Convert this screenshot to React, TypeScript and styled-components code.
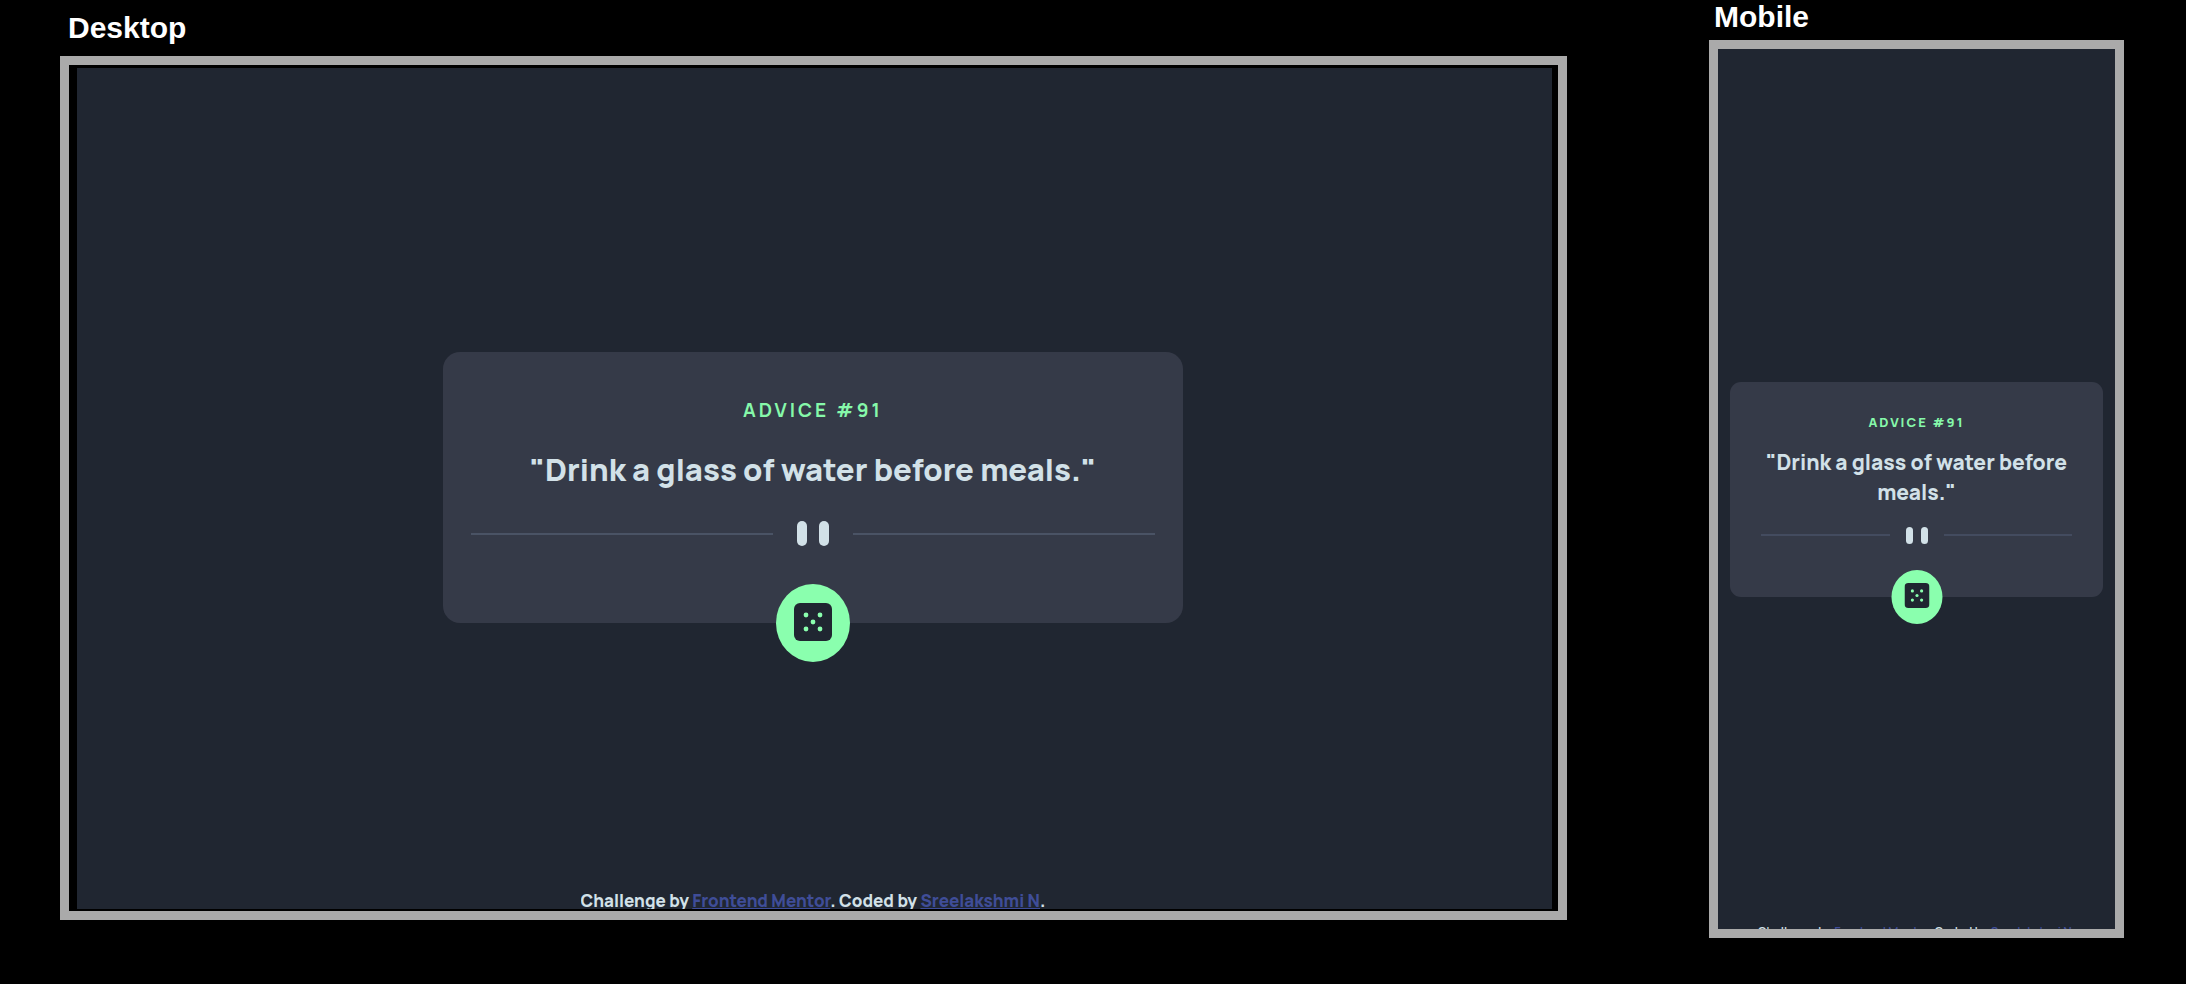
import React from "react";
import styled, { createGlobalStyle, css } from "styled-components";

const GlobalStyle = createGlobalStyle`
  *, *::before, *::after { box-sizing: border-box; }
  body { margin: 0; background: #000; }
`;

const uiFont = `Manrope, Inter, "Open Sans", sans-serif`;

const Page = styled.main`
  display: flex;
  gap: 142px;
  min-height: 100vh;
  padding: 0 62px 0 60px;
  background: #000;
  @media (max-width: 1200px) {
    flex-direction: column;
    gap: 32px;
    padding: 0 16px;
  }
`;

type Variant = { $compact?: boolean };

const Column = styled.section<Variant>`
  display: flex;
  flex-direction: column;
  flex: ${(p) => (p.$compact ? "415 1 0" : "1507 1 0")};
  min-width: 0;
  padding: ${(p) => (p.$compact ? "0 0 46px" : "11px 0 64px")};
`;

const Title = styled.h2<Variant>`
  margin: ${(p) => (p.$compact ? "0 0 6px 5px" : "0 0 11px 8px")};
  color: #fff;
  font: 700 30px/34px "Liberation Sans", Arial, sans-serif;
`;

const Frame = styled.div<Variant>`
  display: flex;
  flex: 1;
  border: 9px solid #aaa;
  padding: ${(p) => (p.$compact ? "0" : "3px 6px 2px 8px")};
  background: #000;
`;

const Screen = styled.div<Variant>`
  flex: 1;
  min-width: 0;
  display: grid;
  grid-template-rows: 1fr auto 1fr;
  grid-template-columns: minmax(0, 1fr);
  justify-items: center;
  padding: ${(p) => (p.$compact ? "0 12px" : "0 3px 0 0")};
  background: #202631;
  font-family: ${uiFont};
`;

const Card = styled.article<Variant>`
  position: relative;
  grid-row: 2;
  display: flex;
  flex-direction: column;
  width: 100%;
  max-width: 740px;
  background: #353a48;
  text-align: center;
  ${(p) =>
    p.$compact
      ? css`
          padding: 33px 31px 53px;
          border-radius: 11px;
        `
      : css`
          margin-bottom: 2px;
          padding: 48px 28px 77px;
          border-radius: 17px;
        `}
`;

const AdviceLabel = styled.h1<Variant>`
  margin: 0;
  color: #86f8aa;
  text-transform: uppercase;
  ${(p) =>
    p.$compact
      ? css`
          font-size: 13px;
          font-weight: 800;
          line-height: 14px;
          letter-spacing: 2px;
        `
      : css`
          font-size: 19px;
          font-weight: 700;
          line-height: 20px;
          letter-spacing: 3px;
        `}
`;

const Quote = styled.p<Variant>`
  color: #d2e1e8;
  font-weight: 800;
  ${(p) =>
    p.$compact
      ? css`
          margin: 18px 0 20px;
          font-size: 21px;
          line-height: 30px;
        `
      : css`
          margin: 27px 0 30px;
          font-size: 31px;
          line-height: 44px;
        `}
`;

const Divider = styled.div<Variant>`
  display: flex;
  align-items: center;
  gap: ${(p) => (p.$compact ? "16px" : "24px")};
  &::before,
  &::after {
    content: "";
    flex: 1;
    height: 2px;
    background: ${(p) => (p.$compact ? "#434b5f" : "#4a5365")};
  }
`;

const Bars = styled.span<Variant>`
  display: flex;
  justify-content: space-between;
  width: ${(p) => (p.$compact ? "22px" : "32px")};
  height: ${(p) => (p.$compact ? "17px" : "25px")};
  &::before,
  &::after {
    content: "";
    width: ${(p) => (p.$compact ? "7px" : "10px")};
    border-radius: 5px;
    background: #d2e1e8;
  }
`;

const DiceButton = styled.button<Variant>`
  position: absolute;
  left: 50%;
  bottom: 0;
  transform: translate(-50%, 50%);
  display: flex;
  align-items: center;
  justify-content: center;
  border: 0;
  border-radius: 50%;
  background: #8affae;
  cursor: pointer;
  width: ${(p) => (p.$compact ? "51px" : "74px")};
  height: ${(p) => (p.$compact ? "54px" : "78px")};
  padding: ${(p) => (p.$compact ? "0 0 3px" : "0 0 3px")};
  svg {
    display: block;
    width: ${(p) => (p.$compact ? "25px" : "38px")};
    height: auto;
  }
`;

const Footer = styled.footer<Variant>`
  grid-row: 3;
  align-self: end;
  overflow: hidden;
  color: #d2e1e8;
  white-space: nowrap;
  ${(p) =>
    p.$compact
      ? css`
          height: 5px;
          font-size: 12px;
          font-weight: 600;
          line-height: 16px;
        `
      : css`
          height: 20px;
          font-size: 17px;
          font-weight: 800;
          line-height: 24px;
        `}
`;

const FooterLink = styled.a`
  color: #3f4d98;
  text-decoration: underline;
`;

const DiceIcon = () => (
  <svg viewBox="0 0 38 38" aria-hidden="true">
    <rect width="38" height="38" rx="6" fill="#202631" />
    <g fill="#8affae">
      <circle cx="12" cy="12" r="2.4" />
      <circle cx="26" cy="12" r="2.4" />
      <circle cx="19" cy="19" r="2.4" />
      <circle cx="12" cy="26" r="2.4" />
      <circle cx="26" cy="26" r="2.4" />
    </g>
  </svg>
);

const Preview = ({ title, compact = false }: { title: string; compact?: boolean }) => (
  <Column $compact={compact}>
    <Title $compact={compact}>{title}</Title>
    <Frame $compact={compact}>
      <Screen $compact={compact}>
        <Card $compact={compact}>
          <AdviceLabel $compact={compact}>Advice #91</AdviceLabel>
          <Quote $compact={compact}>"Drink a glass of water before meals."</Quote>
          <Divider $compact={compact}>
            <Bars $compact={compact} />
          </Divider>
          <DiceButton $compact={compact} type="button" aria-label="New advice">
            <DiceIcon />
          </DiceButton>
        </Card>
        <Footer $compact={compact}>
          Challenge by <FooterLink href="#mentor">Frontend Mentor</FooterLink>. Coded by{" "}
          <FooterLink href="#author">Sreelakshmi N</FooterLink>.
        </Footer>
      </Screen>
    </Frame>
  </Column>
);

export default function App() {
  return (
    <>
      <GlobalStyle />
      <Page>
        <Preview title="Desktop" />
        <Preview title="Mobile" compact />
      </Page>
    </>
  );
}
